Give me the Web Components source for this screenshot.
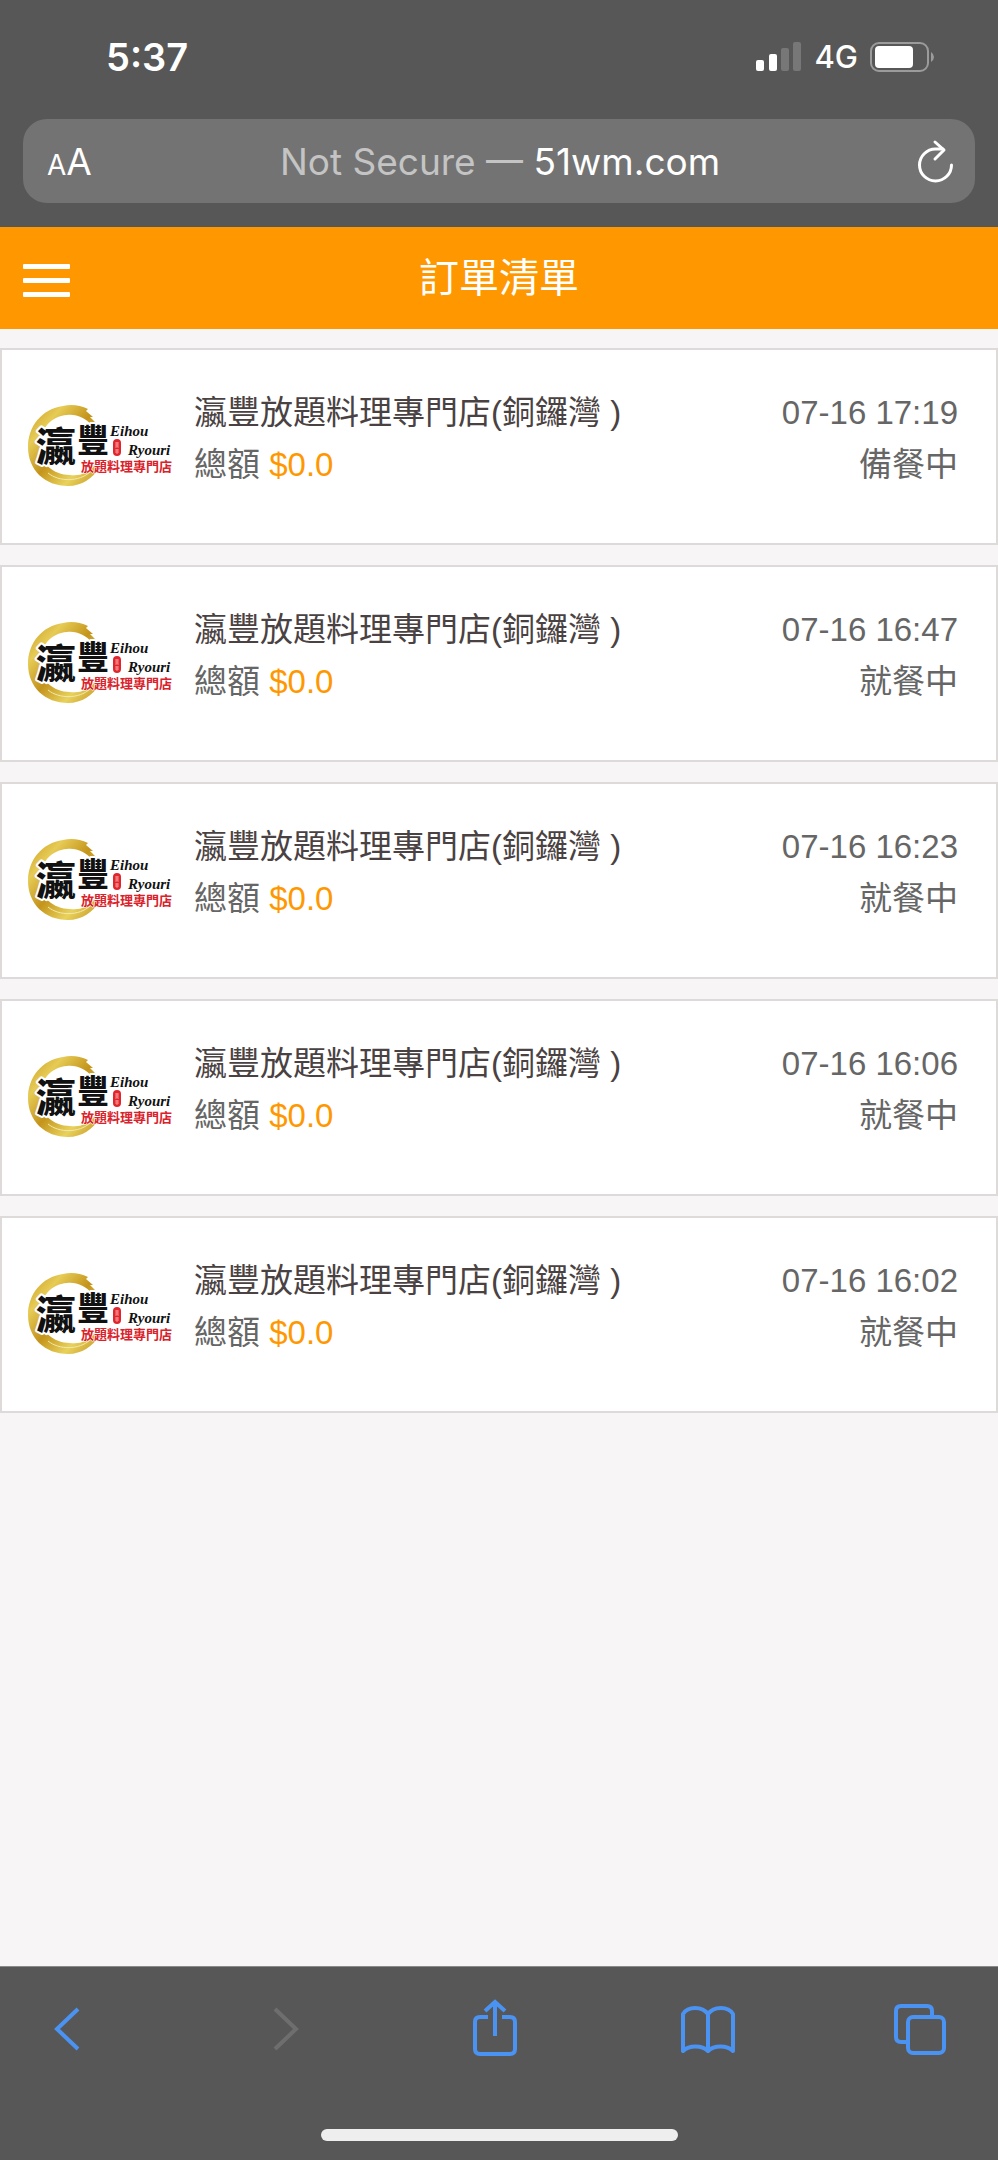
<!DOCTYPE html>
<html lang="zh-Hant">
<head>
<meta charset="utf-8">
<meta name="viewport" content="width=device-width, initial-scale=1">
<title>訂單清單</title>
<style>
  body {
    margin: 0;
    min-height: 100vh;
    display: flex;
    flex-direction: column;
    background: #f7f5f6;
    font-family: "Liberation Sans", "Noto Sans CJK TC", sans-serif;
  }
  main {
    flex: 1;
    display: flex;
    flex-direction: column;
    gap: 20px;
    padding: 19px 0 20px;
  }
</style>
</head>
<body>
  <status-bar time="5:37" network="4G"></status-bar>
  <address-bar>
    <span slot="state">Not Secure —</span>
    51wm.com
  </address-bar>
  <page-header>訂單清單</page-header>
  <main>
    <order-card date="07-16 17:19" status="備餐中" total="$0.0">瀛豐放題料理專門店(銅鑼灣 )</order-card>
    <order-card date="07-16 16:47" status="就餐中" total="$0.0">瀛豐放題料理專門店(銅鑼灣 )</order-card>
    <order-card date="07-16 16:23" status="就餐中" total="$0.0">瀛豐放題料理專門店(銅鑼灣 )</order-card>
    <order-card date="07-16 16:06" status="就餐中" total="$0.0">瀛豐放題料理專門店(銅鑼灣 )</order-card>
    <order-card date="07-16 16:02" status="就餐中" total="$0.0">瀛豐放題料理專門店(銅鑼灣 )</order-card>
  </main>
  <tool-bar></tool-bar>

<script>
class StatusBar extends HTMLElement {
  constructor() {
    super();
    this.attachShadow({ mode: "open" });
    this.shadowRoot.innerHTML = `
      <style>
        :host {
          display: flex;
          justify-content: space-between;
          align-items: center;
          padding: 33px 64px 38px 106px;
          background: #575757;
          color: #fff;
          font-family: Inter, sans-serif;
          line-height: 48px;
        }
        #time { font-size: 38px; font-weight: 600; }
        #right { display: flex; align-items: center; gap: 12px; }
        #network { font-size: 31px; font-weight: 500; }
        svg { display: block; }
      </style>
      <span id="time"></span>
      <div id="right">
        <svg width="46" height="30" viewBox="0 0 46 30" fill="#fff">
          <rect x="0" y="18" width="8" height="11" rx="2"/>
          <rect x="13" y="12" width="8" height="17" rx="2"/>
          <rect x="25" y="6" width="8" height="23" rx="2" fill="#777"/>
          <rect x="37" y="0" width="8" height="29" rx="2" fill="#777"/>
        </svg>
        <span id="network"></span>
        <svg width="64" height="32" viewBox="0 0 64 32">
          <rect x="1" y="2" width="57" height="28" rx="8" fill="none" stroke="#9b9b9b" stroke-width="2"/>
          <rect x="5" y="5" width="38" height="22" rx="4" fill="#fff"/>
          <path d="M61 11q3 2 3 5t-3 5z" fill="#9b9b9b"/>
        </svg>
      </div>
    `;
  }
  connectedCallback() {
    this.shadowRoot.querySelector("#time").textContent = this.getAttribute("time");
    this.shadowRoot.querySelector("#network").textContent = this.getAttribute("network");
  }
}

class AddressBar extends HTMLElement {
  constructor() {
    super();
    this.attachShadow({ mode: "open" });
    this.shadowRoot.innerHTML = `
      <style>
        :host {
          display: block;
          padding: 0 23px 24px;
          background: #575757;
          font-family: Inter, sans-serif;
        }
        #field {
          display: grid;
          grid-template-columns: 1fr auto 1fr;
          align-items: center;
          height: 84px;
          padding: 0 22px 0 24px;
          border-radius: 24px;
          background: #737373;
          color: #fff;
          font-size: 37px;
        }
        button {
          padding: 0;
          border: 0;
          background: none;
          color: inherit;
          font: inherit;
        }
        #text-size { justify-self: start; }
        small { font-size: 28px; }
        #reload { justify-self: end; }
        svg { display: block; }
        ::slotted(span) { color: #c4c4c4; }
      </style>
      <div id="field">
        <button id="text-size"><small>A</small>A</button>
        <div><slot name="state"></slot> <slot></slot></div>
        <button id="reload" aria-label="Reload">
          <svg width="36" height="44" viewBox="0 0 36 44" fill="none" stroke="#fff" stroke-width="3" stroke-linecap="round" stroke-linejoin="round">
            <path d="M34.500 26A16 16 0 1 1 18.500 10H26"/>
            <path d="M18 3L27 11L18 20"/>
          </svg>
        </button>
      </div>
    `;
  }
}

class PageHeader extends HTMLElement {
  constructor() {
    super();
    this.attachShadow({ mode: "open" });
    this.shadowRoot.innerHTML = `
      <style>
        :host {
          display: grid;
          grid-template-columns: 1fr auto 1fr;
          align-items: center;
          height: 102px;
          padding: 0 23px;
          background: #ff9800;
          color: #fff;
        }
        button {
          justify-self: start;
          display: grid;
          gap: 9px;
          width: 47px;
          padding: 4px 0 0;
          border: 0;
          background: none;
        }
        i { height: 5px; border-radius: 1px; background: #fff; }
        h1 { margin: 0; font-size: 40px; font-weight: 400; line-height: 52px; }
      </style>
      <button aria-label="Menu"><i></i><i></i><i></i></button>
      <h1><slot></slot></h1>
    `;
  }
}

class ShopLogo extends HTMLElement {
  constructor() {
    super();
    this.attachShadow({ mode: "open" });
    this.shadowRoot.innerHTML = `
      <style>
        :host { display: block; }
        svg { display: block; }
        text { font-family: "Noto Sans CJK TC", sans-serif; font-weight: 900; }
        .brush { fill: #111; stroke: #fff; stroke-width: 4; stroke-linejoin: round; paint-order: stroke; }
        .script { font: italic bold 15px "Liberation Serif", serif; fill: #111; }
        .red { font-size: 13px; font-weight: 700; fill: #d9222a; stroke: #fff; stroke-width: 1; paint-order: stroke; }
      </style>
      <svg width="160" height="104" viewBox="0 -8 160 104">
        <defs>
          <linearGradient id="gold" x1="0" y1="0" x2="1" y2="1">
            <stop offset="0" stop-color="#c99a1c"/>
            <stop offset=".25" stop-color="#e6cb55"/>
            <stop offset=".5" stop-color="#c4941b"/>
            <stop offset=".75" stop-color="#e8d25c"/>
            <stop offset="1" stop-color="#c3911f"/>
          </linearGradient>
        </defs>
        <path d="M68 14C60 10 51 9 43 11C22 14 8 31 8 52C8 75 25 91 48 91C62 91 73 83 79 73L76 68C68 79 60 81 50 80C33 80 20 68 20 51C20 34 31 21 47 20C57 19 66 23 72 31L76 28L70 22L73 22L66 16Z" fill="url(#gold)"/>
        <path d="M70 77C59 87 39 87 28 78M78 64Q76 69 69 76" fill="none" stroke="#f3e8ad" stroke-width="1"/>
        <text class="brush" x="16" y="66" font-size="40">瀛</text>
        <text class="brush" x="57" y="57" font-size="32">豐</text>
        <text class="script" x="90" y="41">Eihou</text>
        <text class="script" x="108" y="60">Ryouri</text>
        <rect x="93" y="44" width="8" height="17" rx="4" fill="#e0252d"/>
        <path d="M95 48h4M97 47v5M95 50h4M95 52h4M95 55h4M95 57h4M97 54v5" stroke="#f9b9b4" stroke-width=".7"/>
        <text class="red" x="61" y="76">放題料理專門店</text>
      </svg>
    `;
  }
}

class OrderCard extends HTMLElement {
  constructor() {
    super();
    this.attachShadow({ mode: "open" });
    this.shadowRoot.innerHTML = `
      <style>
        :host {
          display: flex;
          gap: 14px;
          padding: 37px 38px 52px 18px;
          border: 2px solid #dddad9;
          background: #fff;
          color: #666;
          font-size: 33px;
          line-height: 52px;
        }
        #info { flex: 1; }
        #name { color: #4a4242; }
        #total { color: #ff9800; }
        #meta { text-align: right; }
      </style>
      <shop-logo></shop-logo>
      <div id="info">
        <div id="name"><slot></slot></div>
        <div>總額 <span id="total"></span></div>
      </div>
      <div id="meta">
        <div id="date"></div>
        <div id="status"></div>
      </div>
    `;
  }
  connectedCallback() {
    for (const name of ["total", "date", "status"]) {
      this.shadowRoot.getElementById(name).textContent = this.getAttribute(name);
    }
  }
}

class ToolBar extends HTMLElement {
  constructor() {
    super();
    this.attachShadow({ mode: "open" });
    this.shadowRoot.innerHTML = `
      <style>
        :host {
          display: block;
          padding: 30px 0 19px;
          border-top: 1px solid #8a8a8a;
          background: #575757;
        }
        nav {
          display: flex;
          justify-content: space-between;
          padding: 0 46px 0 35px;
        }
        button { padding: 0; border: 0; background: none; color: #4b93f2; }
        button:disabled { color: #6e6e6e; }
        svg { display: block; fill: none; stroke: currentColor; stroke-width: 4; }
        #home {
          width: 357px;
          height: 12px;
          margin: 68px auto 0;
          border-radius: 6px;
          background: #eee;
        }
      </style>
      <nav>
        <button aria-label="Back">
          <svg width="64" height="64" viewBox="0 0 64 64"><path d="M43 12L22 32L43 52"/></svg>
        </button>
        <button aria-label="Forward" disabled>
          <svg width="64" height="64" viewBox="0 0 64 64"><path d="M27 12L48 32L27 52"/></svg>
        </button>
        <button aria-label="Share">
          <svg width="64" height="64" viewBox="0 0 64 64"><path d="M26 20H18Q13 20 13 25V52Q13 57 18 57H48Q53 57 53 52V25Q53 20 48 20H40M33 39V5M23 14L33 5L43 14"/></svg>
        </button>
        <button aria-label="Bookmarks">
          <svg width="64" height="64" viewBox="0 0 64 64" stroke-linejoin="round"><path d="M8 54V17C13 9 27 9 33 17C39 9 53 9 58 17V54C52 48 39 48 33 54C27 48 14 48 8 54ZM33 17V54"/></svg>
        </button>
        <button aria-label="Tabs">
          <svg width="64" height="64" viewBox="0 0 64 64"><path d="M20 45H13Q8 45 8 40V14Q8 9 13 9H39Q44 9 44 14V20"/><rect x="20" y="20" width="36" height="36" rx="5"/></svg>
        </button>
      </nav>
      <div id="home"></div>
    `;
  }
}

customElements.define("status-bar", StatusBar);
customElements.define("address-bar", AddressBar);
customElements.define("page-header", PageHeader);
customElements.define("shop-logo", ShopLogo);
customElements.define("order-card", OrderCard);
customElements.define("tool-bar", ToolBar);
</script>
</body>
</html>
